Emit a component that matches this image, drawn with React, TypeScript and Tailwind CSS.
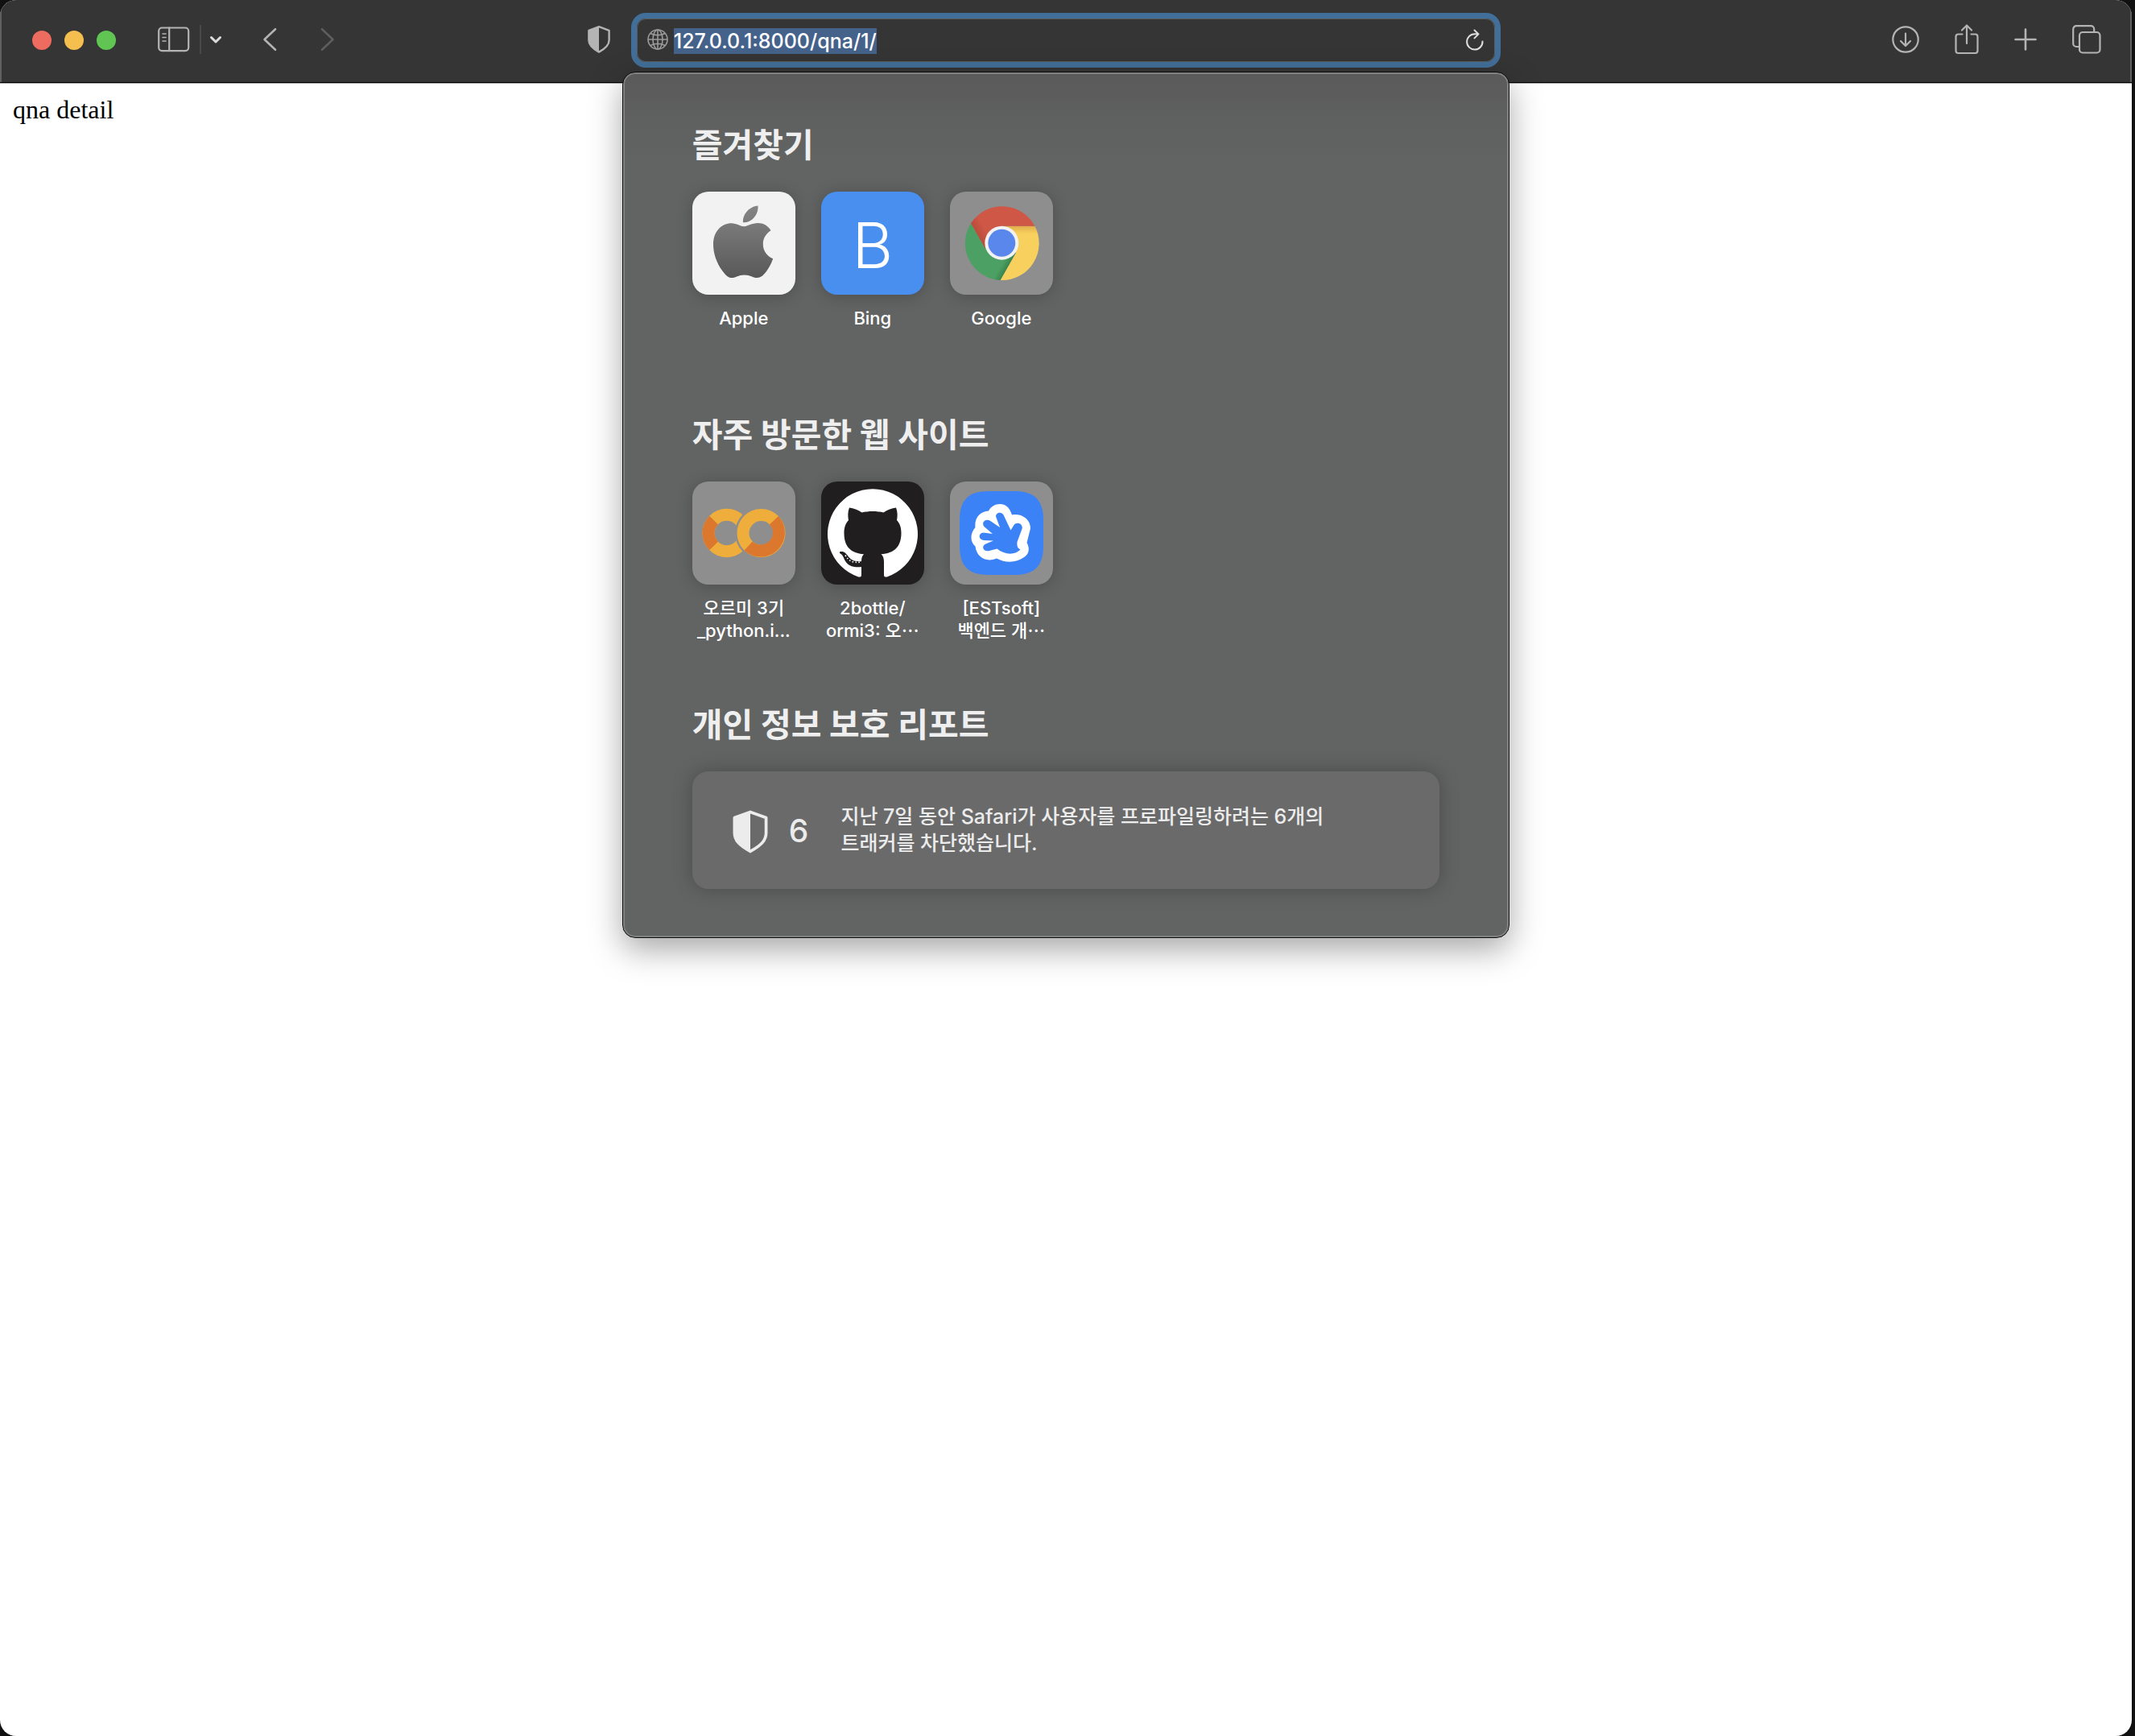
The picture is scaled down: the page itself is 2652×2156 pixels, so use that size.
import { useEffect, useRef, type ReactNode } from "react";

function HalfShield({ className }: { className: string }) {
  return (
    <svg viewBox="0 0 30 36" className={className} aria-hidden="true">
      <path d="M15 2.200 27.600 6.800V19c0 5.600-3.600 9.800-12.600 14.600C6 28.800 2.400 24.600 2.400 19V6.800Z" fill="none" stroke="currentColor" strokeWidth="2.400" strokeLinejoin="round" />
      <path d="M15 2.200 2.400 6.800V19c0 5.600 3.600 9.800 12.600 14.600Z" fill="currentColor" />
    </svg>
  );
}

function AppleLogo() {
  return (
    <svg viewBox="0 0 128 128" className="size-full" aria-hidden="true">
      <defs>
        <linearGradient id="appleBody" gradientUnits="userSpaceOnUse" x1="0" y1="18" x2="0" y2="107">
          <stop offset="0" stopColor="#858585" />
          <stop offset="1" stopColor="#585858" />
        </linearGradient>
      </defs>
      <g fill="url(#appleBody)">
        <path d="M81.500 17.500c.6 7-2.500 12.300-6 16-3.500 3.400-8 5.200-12.500 4.800-.5-6 2.300-11.200 5.700-14.700 3.500-3.500 8.600-6 12.800-6.100Z" />
        <path d="M97.500 48.200c-6 4-9.700 9.600-9.700 16.800 0 8.300 4.700 15 12.400 18.300-2 5.700-4.700 11-8.200 15.800-3.700 5-7.300 8-11.800 8-5.200 0-7.600-3.600-15.700-3.600-7.800 0-10.500 3.600-15.500 3.600-4.400 0-7.800-3.500-11.600-8.700C30 88.500 26 76.500 26 65.700c0-17 10.700-26.500 22.500-26.500 6.500 0 11.500 4 15.800 4 4 0 9.700-4.200 17.200-4.200 6.500 0 12.500 3.200 16 9.200Z" />
      </g>
    </svg>
  );
}

function ChromeLogo() {
  return (
    <svg viewBox="0 0 128 128" className="size-full" aria-hidden="true">
      <defs>
        <linearGradient id="redShade" gradientUnits="userSpaceOnUse" x1="32" y1="59" x2="46" y2="51">
          <stop offset="0" stopColor="#b04837" />
          <stop offset="1" stopColor="#cf5746" />
        </linearGradient>
        <linearGradient id="yellowShade" x1="0" y1="0" x2="0" y2="1">
          <stop offset="0" stopColor="#dfae4b" />
          <stop offset=".14" stopColor="#f8d05e" />
        </linearGradient>
        <linearGradient id="greenShade" gradientUnits="userSpaceOnUse" x1="72" y1="97" x2="63" y2="92">
          <stop offset="0" stopColor="#33804a" />
          <stop offset="1" stopColor="#4da063" />
        </linearGradient>
      </defs>
      <path d="M26 39.300A46 46 0 0 0 62.700 110L82 76 64 64 44 71Z" fill="url(#greenShade)" />
      <path d="M105.400 42.700A46 46 0 0 1 62.700 110L82 76 64 64V42.700Z" fill="url(#yellowShade)" />
      <path d="M26 39.300A46 46 0 0 1 105.400 42.700H64V64L44 71Z" fill="url(#redShade)" />
      <circle cx="64.300" cy="63.700" r="21" fill="#f2f2f2" />
      <circle cx="64.300" cy="63.700" r="17" fill="#5a87ec" />
    </svg>
  );
}

function ColabLogo() {
  return (
    <svg viewBox="0 0 128 128" className="size-full" aria-hidden="true">
      <defs>
        <mask id="ringGap" maskUnits="userSpaceOnUse" x="0" y="0" width="128" height="128">
          <rect width="128" height="128" fill="#fff" />
          <circle cx="85.500" cy="64" r="32.500" fill="#000" />
        </mask>
      </defs>
      <g fill="none" strokeWidth="15">
        <g mask="url(#ringGap)">
          <circle cx="42.700" cy="64" r="22.700" stroke="#efae3c" />
          <path d="M26.600 48a22.700 22.700 0 0 0 0 32" stroke="#dc782d" />
        </g>
        <circle cx="85.500" cy="64" r="22.500" stroke="#efae3c" />
        <path d="M101.400 48.100a22.500 22.500 0 0 1-31.800 31.800" stroke="#dc782d" />
      </g>
    </svg>
  );
}

function OctocatLogo() {
  return (
    <svg viewBox="0 0 128 128" className="size-full" aria-hidden="true">
      <path d="M50 116c0 2.400-1.500 3-3.800 2.400A56 56 0 1 1 81.800 118.400C79.500 119 78 118.400 78 116V100H50Z" fill="#fff" />
      <path d="M35 32.500c5 .4 11 3 15.500 6 8.500-2 18.500-2 27 0 4.500-3 10.500-5.600 15.500-6 2 5 2 10.500 1 15.500 4 4.500 5.500 9.500 5.500 16 0 17.500-9 25-25 26.300 2.500 2.200 3.500 5.200 3.500 9.700v18H50v-18c0-4.500.5-7 3-9.700-16-1.500-24.500-9-24.500-26.300 0-6.500 1.500-11.500 5.500-16-1-5-1-10.500 1-15.500Z" fill="#211e1f" />
      <path d="M23 87.500c4-1.500 7 .5 9.500 4 4 6 9 8.500 18 7.500v7c-11 1-17-1-21-8-2-4.500-3-7.500-6.500-9Z" fill="#211e1f" />
      <path d="M30 91.500c4 7 9 10 20 8.500" fill="none" stroke="#fff" strokeWidth="1.600" strokeDasharray="1.600 2.400" />
    </svg>
  );
}

function HandLogo() {
  return (
    <svg viewBox="0 0 128 128" className="size-full" aria-hidden="true">
      <path d="M12 48C12 23 23 12 48 12H80C105 12 116 23 116 48V80C116 105 105 116 80 116H48C23 116 12 105 12 80Z" fill="#3c82f7" />
      <path d="M62 28C69 28 74 32 77 41.500 90 39 101 48 99.800 59L95.500 76C99 82 98.500 89 94 92.500 84 101 70 102 58 95.500 45 101 33 94 31.500 80.500 25 75 24.500 65 31.500 57 30 45 38 37 48 36.500 51 31 56 28 62 28Z" fill="#fff" />
      <path d="M57 43.500C57 38 64 37 66.500 41.500L75.500 60.500 79.500 54C82 50 90 51 89.800 58L83.500 75C83 80 84 83 87.500 84.500 80 92 68 91 58.500 83.500L49 86C41 88 38.500 80 44.500 77.500L54 73.500 42 73C35 72 35 64 41.500 63.500L53 65 43 56.500C38 51 44 45.500 49.500 48.500L62 57Z" fill="#3c82f7" />
    </svg>
  );
}

type Site = { name: ReactNode; label: string; tile: string; art: ReactNode };

const favorites: Site[] = [
  { label: "Apple", name: "Apple", tile: "bg-[#f2f2f2]", art: <AppleLogo /> },
  {
    label: "Bing",
    name: "Bing",
    tile: "bg-[#488fef]",
    art: <span className="pt-1.5 text-[78px] leading-none font-light text-white">B</span>,
  },
  { label: "Google", name: "Google", tile: "bg-[#8e8e8e]", art: <ChromeLogo /> },
];

const frequent: Site[] = [
  { label: "오르미 3기_python.ipynb", name: <>오르미 3기<br />_python.i...</>, tile: "bg-[#8e8e8e]", art: <ColabLogo /> },
  { label: "2bottle/ormi3", name: <>2bottle/<br />ormi3: 오⋯</>, tile: "bg-[#211e1f]", art: <OctocatLogo /> },
  { label: "[ESTsoft] 백엔드", name: <>[ESTsoft]<br />백엔드 개⋯</>, tile: "bg-[#8e8e8e]", art: <HandLogo /> },
];

function SiteSection({ title, sites }: { title: string; sites: Site[] }) {
  return (
    <section className="min-h-[360px]">
      <h2 className="text-[41px] leading-[60px] font-bold text-[#efefef]">{title}</h2>
      <ul className="mt-7 flex gap-8">
        {sites.map((site) => (
          <li key={site.label} className="w-32">
            <a href="#" aria-label={site.label} className="block">
              <span className={`flex size-32 items-center justify-center overflow-hidden rounded-[20px] shadow-[0_2px_20px_rgba(0,0,0,0.22)] ${site.tile}`}>
                {site.art}
              </span>
              <span className="mt-[15px] block text-center text-[22px] leading-7 font-medium whitespace-nowrap text-white">
                {site.name}
              </span>
            </a>
          </li>
        ))}
      </ul>
    </section>
  );
}

function AddressField() {
  const field = useRef<HTMLInputElement>(null);
  useEffect(() => {
    field.current?.focus();
    field.current?.select();
  }, []);
  return (
    <form className="flex h-[68px] items-center rounded-[18px] border-[7px] border-[#426f99] bg-[#353535] px-[13px] shadow-[inset_0_0_0_1px_#5a5b5b]" onSubmit={(e) => e.preventDefault()}>
      <svg viewBox="0 0 26 26" className="mb-0.5 size-[26px] shrink-0 text-[#9b9b9b]" fill="none" stroke="currentColor" strokeWidth="1.600" aria-hidden="true">
        <circle cx="13" cy="13" r="12" />
        <ellipse cx="13" cy="13" rx="6" ry="12" />
        <path d="M13 1v24M1 13h24M4 5.500c5 3 13 3 18 0M4 20.500c5-3 13-3 18 0" />
      </svg>
      <input
        ref={field}
        aria-label="Address"
        defaultValue="127.0.0.1:8000/qna/1/"
        className="mt-0.5 ml-[7px] h-8 min-w-0 flex-1 bg-transparent text-[25px] leading-8 font-medium text-white outline-none selection:bg-[#45628a] selection:text-white"
      />
      <button type="button" aria-label="Reload" className="shrink-0 text-[#dedede]">
        <svg viewBox="0 0 24 28" className="h-7 w-6" fill="none" stroke="currentColor" strokeWidth="2" strokeLinecap="round" strokeLinejoin="round" aria-hidden="true">
          <path d="M21.500 15.500A9.700 9.700 0 1 1 11.800 6.200H16.500M11.500 1.500 16.500 6.400 11.500 11.400" />
        </svg>
      </button>
    </form>
  );
}

function StartPanel() {
  return (
    <div className="absolute -inset-x-[11px] top-full mt-[5px] rounded-2xl border border-[#0c0c0c] bg-linear-to-b from-[#5a5a5a] to-[#626463] to-10% px-[86px] py-[60px] shadow-[inset_0_0_0_2px_#808181,0_14px_40px_rgba(0,0,0,0.35)]">
      <SiteSection title="즐겨찾기" sites={favorites} />
      <SiteSection title="자주 방문한 웹 사이트" sites={frequent} />
      <section>
        <h2 className="text-[41px] leading-[60px] font-bold text-[#efefef]">개인 정보 보호 리포트</h2>
        <a href="#" className="mt-7 flex min-h-[146px] items-center rounded-[20px] bg-[#6a6a6a] px-[48px] text-[#ececec] shadow-[0_0_24px_rgba(0,0,0,0.25)]">
          <HalfShield className="mt-1 h-[56px] w-[48px] shrink-0" />
          <span className="ml-6 text-[39px] leading-none font-medium">6</span>
          <span className="ml-10 text-[25px] leading-[33px] font-medium">
            지난 7일 동안 Safari가 사용자를 프로파일링하려는 6개의
            <br />
            트래커를 차단했습니다.
          </span>
        </a>
      </section>
    </div>
  );
}

export default function App() {
  return (
    <div className="min-h-screen bg-[#111] pr-1">
      <div className="flex min-h-screen flex-col overflow-hidden rounded-[20px] bg-white font-[Inter,'Noto_Sans_CJK_KR',sans-serif]">
        <header className="relative z-10 grid h-26 grid-cols-[1fr_40.8%_1fr] items-center bg-[#353535] pb-1 shadow-[inset_0_-1px_0_#b0b0b0,inset_0_-2px_0_#000,inset_2px_0_0_#606060,inset_-2px_0_0_#606060]">
          <div className="flex items-center pl-10 text-[#b4b4b4]">
            <div className="flex gap-4">
              <button aria-label="Close" className="size-6 rounded-full bg-[#ed6b5f]" />
              <button aria-label="Minimize" className="size-6 rounded-full bg-[#f5bf4f]" />
              <button aria-label="Zoom" className="size-6 rounded-full bg-[#61c554]" />
            </div>
            <div className="flex flex-1 items-center pb-0.5">
              <button aria-label="Sidebar" className="ml-13">
                <svg viewBox="0 0 40 32" className="h-8 w-10" fill="none" stroke="currentColor" strokeWidth="2.200" strokeLinecap="round" aria-hidden="true">
                  <rect x="1.200" y="1.500" width="37" height="28.600" rx="4" />
                  <path d="M14.200 1.500v28.600" />
                  <path d="M6 9h4M6 13.500h4M6 18h4" strokeWidth="1.600" />
                </svg>
              </button>
              <span className="ml-3 h-9 w-0.5 bg-[#48494a]" />
              <button aria-label="Sidebar menu" className="ml-2.5 text-[#dcdcdc]">
                <svg viewBox="0 0 16 12" className="h-3 w-4" fill="none" stroke="currentColor" strokeWidth="3" strokeLinecap="round" strokeLinejoin="round" aria-hidden="true">
                  <path d="m2.500 3.500 5.500 5.500 5.500-5.500" />
                </svg>
              </button>
              <button aria-label="Back" className="ml-[50px]">
                <svg viewBox="0 0 18 30" className="h-[30px] w-[18px]" fill="none" stroke="currentColor" strokeWidth="2.600" strokeLinecap="round" strokeLinejoin="round" aria-hidden="true">
                  <path d="M16 2.200 2.500 15 16 27.800" />
                </svg>
              </button>
              <button aria-label="Forward" className="ml-[54px] text-[#5d5e5e]">
                <svg viewBox="0 0 18 30" className="h-[30px] w-[18px]" fill="none" stroke="currentColor" strokeWidth="2.600" strokeLinecap="round" strokeLinejoin="round" aria-hidden="true">
                  <path d="M2 2.200 15.500 15 2 27.800" />
                </svg>
              </button>
              <button aria-label="Privacy report" className="mr-[25px] ml-auto">
                <HalfShield className="h-9 w-[30px]" />
              </button>
            </div>
          </div>

          <div className="relative">
            <AddressField />
            <StartPanel />
          </div>

          <div className="flex items-center justify-end gap-11 pr-[38px] pb-0.5 text-[#b4b4b4]">
            <button aria-label="Downloads">
              <svg viewBox="0 0 34 34" className="size-[34px]" fill="none" stroke="currentColor" strokeWidth="2.200" strokeLinecap="round" strokeLinejoin="round" aria-hidden="true">
                <circle cx="17" cy="17" r="15.700" />
                <path d="M17 9.500v15M11 19l6 6 6-6" />
              </svg>
            </button>
            <button aria-label="Share">
              <svg viewBox="0 0 30 38" className="h-[38px] w-[30px]" fill="none" stroke="currentColor" strokeWidth="2.200" strokeLinecap="round" strokeLinejoin="round" aria-hidden="true">
                <path d="M9.500 12.500H4.500a3 3 0 0 0-3 3V33a3 3 0 0 0 3 3h21a3 3 0 0 0 3-3V15.500a3 3 0 0 0-3-3h-5M15 24V2M9 7.500 15 1.500l6 6" />
              </svg>
            </button>
            <button aria-label="New tab">
              <svg viewBox="0 0 28 28" className="size-7" fill="none" stroke="currentColor" strokeWidth="2.600" strokeLinecap="round" aria-hidden="true">
                <path d="M14 1.500v25M1.500 14h25" />
              </svg>
            </button>
            <button aria-label="Tab overview">
              <svg viewBox="0 0 36 36" className="size-9" fill="none" stroke="currentColor" strokeWidth="2.200" strokeLinejoin="round" aria-hidden="true">
                <rect x="9" y="9" width="25.500" height="25.500" rx="4" />
                <path d="M9 27H5.200a4 4 0 0 1-4-4V5.200a4 4 0 0 1 4-4h18a4 4 0 0 1 4 4v4" />
              </svg>
            </button>
          </div>
        </header>
        <main className="flex-1 px-4 py-3.5 font-['Liberation_Serif',serif] text-[32px] leading-9 text-black">qna detail</main>
      </div>
    </div>
  );
}
